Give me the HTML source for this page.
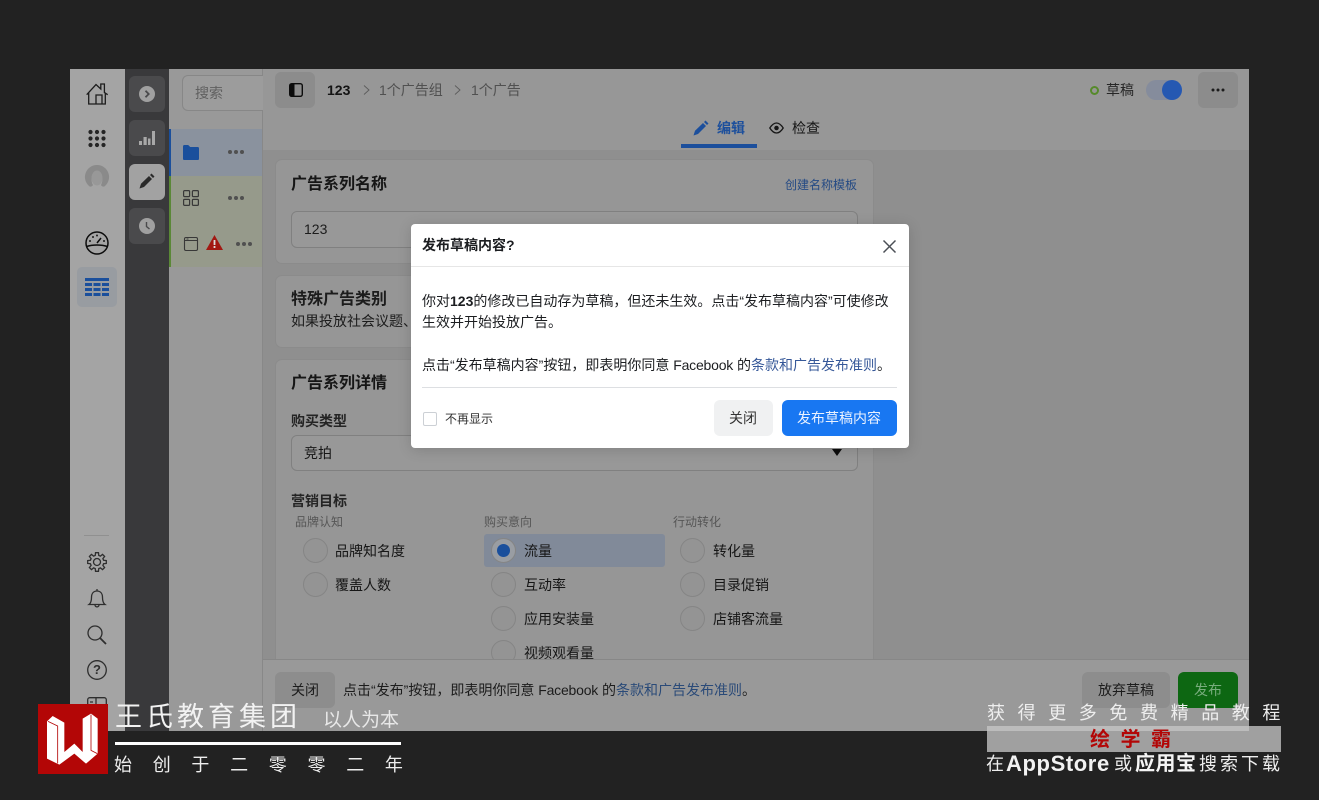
<!DOCTYPE html>
<html><head><meta charset="utf-8"><style>
*{box-sizing:border-box;margin:0;padding:0}
html,body{width:1319px;height:800px;overflow:hidden;background:#222}
body{position:relative;font-family:"Liberation Sans","Noto Sans CJK SC",sans-serif;color:#161616}
.a{position:absolute}
.t{position:absolute;white-space:nowrap;line-height:20px}
.b{font-weight:700}
.card{position:absolute;left:275px;width:599px;background:#969696;border:1px solid #8b8b8b;border-radius:7px}
.r{position:absolute;width:25px;height:25px;border-radius:50%;border:1px solid #858585;background:#949494}
.sq{position:absolute;left:129px;width:36px;height:36px;border-radius:6px;background:#4a4a4c}
.dots{position:absolute;width:16px;height:4px}
.dots i{position:absolute;top:0;width:4px;height:4px;border-radius:50%;background:#505050}
.dots i:nth-child(1){left:0}.dots i:nth-child(2){left:6px}.dots i:nth-child(3){left:12px}
.f{letter-spacing:-.2px}
svg{position:absolute;overflow:visible}
</style></head><body>
<!-- screen -->
<div class="a" style="left:70px;top:69px;width:1179px;height:662px;background:#969696;overflow:hidden"></div>
<!-- nav 1 -->
<div class="a" style="left:70px;top:69px;width:55px;height:662px;background:#a4a4a4"></div>
<svg style="left:84px;top:81px" width="26" height="26" viewBox="0 0 26 26" fill="none" stroke="#1c1c1c" stroke-width="1.300"><path d="M2.700 13.700L12 3.500l4.800 4.500V3h3.600v8.500l3.300 2.200M4.700 11.500V23h16.600V11.500M12 23v-9h6v9"/></svg>
<svg style="left:88px;top:130px" width="18" height="17" fill="#252525"><circle cx="2.500" cy="2" r="2.100"/><circle cx="9" cy="2" r="2.100"/><circle cx="15.500" cy="2" r="2.100"/><circle cx="2.500" cy="8.500" r="2.100"/><circle cx="9" cy="8.500" r="2.100"/><circle cx="15.500" cy="8.500" r="2.100"/><circle cx="2.500" cy="15" r="2.100"/><circle cx="9" cy="15" r="2.100"/><circle cx="15.500" cy="15" r="2.100"/></svg>
<svg style="left:85px;top:165px" width="24" height="24"><path d="M12 0a12 12 0 0 1 8 21c-1 1-3 1-4-1 3-5 1-13-4-13S5 15 8 20c-1 2-3 2-4 1A12 12 0 0 1 12 0z" fill="#8a8a8a"/><ellipse cx="12" cy="13" rx="5.500" ry="7.500" fill="#989898"/></svg>
<svg style="left:85px;top:231px" width="24" height="24" fill="none" stroke="#0c0c0c" stroke-width="1.500"><circle cx="12" cy="12" r="11"/><path d="M1.500 15.500c6-2 15-2 21 0M12 12l4-5"/><g fill="#1c1c1c" stroke="none"><circle cx="5" cy="10" r="1"/><circle cx="8" cy="6" r="1"/><circle cx="12" cy="4.500" r="1"/><circle cx="19" cy="10" r="1"/></g></svg>
<div class="a" style="left:77px;top:267px;width:40px;height:40px;border-radius:5px;background:#989ca1"></div>
<svg style="left:85px;top:278px" width="24" height="19" fill="#1a4f9c"><rect width="24" height="3"/><rect y="5" width="7" height="3"/><rect x="8.500" y="5" width="7" height="3"/><rect x="17" y="5" width="7" height="3"/><rect y="10" width="7" height="3"/><rect x="8.500" y="10" width="7" height="3"/><rect x="17" y="10" width="7" height="3"/><rect y="15" width="7" height="3"/><rect x="8.500" y="15" width="7" height="3"/><rect x="17" y="15" width="7" height="3"/></svg>
<div class="a" style="left:84px;top:535px;width:25px;height:1px;background:#909090"></div>
<svg style="left:87px;top:552px" width="20" height="20" fill="none" stroke="#2e2e2e" stroke-width="1.300"><circle cx="10" cy="10" r="3.500"/><path d="M8.240 3.430L8.530.71H11.470L11.760 3.430L13.400 4.110L15.530 2.400L17.600 4.470L15.890 6.600L16.570 8.240L19.290 8.530V11.470L16.570 11.760L15.890 13.400L17.600 15.530L15.530 17.600L13.400 15.890L11.760 16.570L11.470 19.290H8.530L8.240 16.570L6.600 15.890L4.470 17.600L2.400 15.530L4.110 13.400L3.430 11.760L.71 11.470V8.530L3.430 8.240L4.110 6.600L2.400 4.470L4.470 2.400L6.600 4.110Z"/></svg>
<svg style="left:88px;top:588px" width="18" height="21" fill="none" stroke="#2e2e2e" stroke-width="1.300"><path d="M1 16.500c2-1.500 2.500-3.500 2.500-7C3.500 5 6 3 9 3s5.500 2 5.500 6.500c0 3.500.5 5.500 2.500 7zM7 17c0 2.500 4 2.500 4 0M9 1v2"/></svg>
<svg style="left:87px;top:625px" width="20" height="20" fill="none" stroke="#2e2e2e" stroke-width="1.300"><circle cx="8" cy="8" r="7"/><path d="M13 13l6 6" stroke-width="1.800"/></svg>
<svg style="left:87px;top:660px" width="20" height="20" fill="none" stroke="#2e2e2e" stroke-width="1.300"><circle cx="10" cy="10" r="9.300"/></svg>
<div class="t b" style="left:87px;top:660px;width:20px;text-align:center;font-size:13px;color:#2e2e2e">?</div>
<svg style="left:87px;top:697px" width="20" height="16" fill="none" stroke="#2e2e2e" stroke-width="1.300"><rect x=".7" y=".7" width="18.600" height="16" rx="2"/><path d="M9 1v15M3 5h3M3 8h3"/></svg>
<!-- nav 2 -->
<div class="a" style="left:125px;top:69px;width:44px;height:662px;background:#39393b"></div>
<div class="sq" style="top:76px"></div><div class="a" style="left:139px;top:86px;width:16px;height:16px;border-radius:50%;background:#a0a0a0"></div>
<svg style="left:139px;top:86px" width="16" height="16" fill="none" stroke="#4a4a4c" stroke-width="1.800"><path d="M6.500 4.800l3.200 3.200-3.200 3.200"/></svg>
<div class="sq" style="top:120px"></div>
<svg style="left:139px;top:131px" width="16" height="15" fill="#a8a8a8"><rect x="0" y="10" width="3" height="4"/><rect x="4.500" y="6" width="3.200" height="8"/><rect x="9" y="7.500" width="2.500" height="6.500"/><rect x="13" y="0" width="3" height="14"/></svg>
<div class="sq" style="top:164px;background:#a2a2a2"></div>
<svg style="left:139px;top:173px" width="16" height="16" fill="#2a2a2a"><path d="M.5 15.500L2 10.800 10 3l3 3-8 8zM11 2l1.500-1.500 3 3L14 5z"/></svg>
<div class="sq" style="top:208px"></div><div class="a" style="left:139px;top:218px;width:16px;height:16px;border-radius:50%;background:#a0a0a0"></div>
<svg style="left:139px;top:218px" width="16" height="16" fill="none" stroke="#4a4a4c" stroke-width="1.400"><path d="M7.500 4v4.500l3 2.500"/></svg>
<!-- tree -->
<div class="a" style="left:169px;top:69px;width:94px;height:662px;background:#999;border-right:1px solid #888"></div>
<div class="a" style="left:182px;top:75px;width:81px;height:36px;border:1px solid #878787;border-right:0;border-radius:6px 0 0 6px;background:#9c9c9c"></div>
<div class="t" style="left:195px;top:83px;font-size:14px;color:#606060">搜索</div>
<div class="a" style="left:169px;top:129px;width:93px;height:47px;background:#8a929e;border-left:2px solid #1a4f9c"></div>
<div class="a" style="left:169px;top:176px;width:93px;height:91px;background:#969a8b;border-left:2px solid #5a8836"></div>
<svg style="left:183px;top:145px" width="16" height="15" fill="#1a4f9c"><path d="M0 1.500C0 .7.500 0 1.200 0h4l2 2h7.600c.7 0 1.200.6 1.200 1.300V14c0 .6-.5 1-1.200 1H1.200C.5 15 0 14.600 0 14z"/></svg>
<div class="dots" style="left:228px;top:150px"><i></i><i></i><i></i></div>
<svg style="left:183px;top:190px" width="16" height="16" fill="none" stroke="#383838" stroke-width="1.200"><rect x=".6" y=".6" width="6" height="6" rx="1"/><rect x="9.400" y=".6" width="6" height="6" rx="1"/><rect x=".6" y="9.400" width="6" height="6" rx="1"/><rect x="9.400" y="9.400" width="6" height="6" rx="1"/></svg>
<div class="dots" style="left:228px;top:196px"><i></i><i></i><i></i></div>
<svg style="left:184px;top:237px" width="14" height="14" fill="none" stroke="#383838" stroke-width="1.100"><rect x=".5" y=".5" width="13" height="13" rx="1.500"/><path d="M.5 3.500h13M2.500 2h2"/></svg>
<svg style="left:206px;top:235px" width="17" height="15"><path d="M8.500 0L17 15H0z" fill="#a21812"/><rect x="7.600" y="5" width="1.800" height="5" fill="#ddd"/><rect x="7.600" y="11" width="1.800" height="2" fill="#ddd"/></svg>
<div class="dots" style="left:236px;top:242px"><i></i><i></i><i></i></div>
<!-- main -->
<div class="a" style="left:263px;top:69px;width:986px;height:81px;background:#979797"></div>
<div class="a" style="left:263px;top:150px;width:986px;height:510px;background:#8f8f8f"></div>
<div class="a" style="left:275px;top:72px;width:40px;height:36px;border-radius:6px;background:#8c8c8c"></div>
<svg style="left:289px;top:83px" width="14" height="14" fill="none" stroke="#0c0c0c" stroke-width="1.400"><rect x=".7" y=".7" width="12.600" height="12.600" rx="2"/><rect x="1" y="1" width="4.500" height="12" fill="#0c0c0c" stroke="none"/></svg>
<div class="t b" style="left:327px;top:80px;font-size:14px;color:#141414">123</div>
<svg style="left:363px;top:85px" width="7" height="10" fill="none" stroke="#5c5c5c" stroke-width=".9"><path d="M1 .5l5 4.500-5 4.500"/></svg>
<div class="t" style="left:379px;top:80px;font-size:14px;color:#505050">1个广告组</div>
<svg style="left:454px;top:85px" width="7" height="10" fill="none" stroke="#5c5c5c" stroke-width=".9"><path d="M1 .5l5 4.500-5 4.500"/></svg>
<div class="t" style="left:471px;top:80px;font-size:14px;color:#505050">1个广告</div>
<div class="a" style="left:1090px;top:86px;width:9px;height:9px;border-radius:50%;border:2px solid #568a2a"></div>
<div class="t" style="left:1106px;top:80px;font-size:14px;color:#262626">草稿</div>
<div class="a" style="left:1146px;top:80px;width:36px;height:20px;border-radius:10px;background:#858c9c"></div>
<div class="a" style="left:1162px;top:80px;width:20px;height:20px;border-radius:50%;background:#2558b2"></div>
<div class="a" style="left:1198px;top:72px;width:40px;height:36px;border-radius:6px;background:#8c8c8c"></div>
<svg style="left:1211px;top:88px" width="14" height="4" fill="#1c1c1c"><circle cx="2" cy="2" r="1.500"/><circle cx="7" cy="2" r="1.500"/><circle cx="12" cy="2" r="1.500"/></svg>
<svg style="left:693px;top:120px" width="16" height="16" fill="#1c4f9c"><path d="M.5 15.500L2 10.800 10 3l3 3-8 8zM11 2l1.500-1.500 3 3L14 5z"/></svg>
<div class="t b" style="left:717px;top:118px;font-size:14px;color:#1c4f9c">编辑</div>
<svg style="left:769px;top:122px" width="15" height="12" fill="none" stroke="#161616" stroke-width="1.300"><path d="M.8 6C3 2.500 5.200 1 7.500 1s4.500 1.500 6.700 5c-2.200 3.500-4.400 5-6.700 5S3 9.500.8 6z"/><circle cx="7.500" cy="6" r="1.600" fill="#161616"/></svg>
<div class="t" style="left:792px;top:118px;font-size:14px;color:#161616">检查</div>
<div class="a" style="left:681px;top:144px;width:76px;height:4px;background:#1c4f9c"></div>
<!-- cards -->
<div class="card" style="top:159px;height:105px"></div>
<div class="t b" style="left:291px;top:175px;font-size:16px">广告系列名称</div>
<div class="t" style="left:785px;top:175px;font-size:12px;color:#244a84">创建名称模板</div>
<div class="a" style="left:291px;top:211px;width:567px;height:37px;border:1px solid #808080;border-radius:6px;background:#989898"></div>
<div class="t" style="left:304px;top:219px;font-size:14px;color:#1c1c1c">123</div>
<div class="card" style="top:275px;height:73px"></div>
<div class="t b" style="left:291px;top:290px;font-size:16px;color:#1c1c1c">特殊广告类别</div>
<div class="t" style="left:291px;top:311px;font-size:14px;color:#1c1c1c">如果投放社会议题、</div>
<div class="card" style="top:359px;height:310px"></div>
<div class="t b" style="left:291px;top:374px;font-size:16px">广告系列详情</div>
<div class="t b" style="left:291px;top:411px;font-size:14px;color:#242424">购买类型</div>
<div class="a" style="left:291px;top:435px;width:567px;height:36px;border:1px solid #808080;border-radius:6px;background:#989898"></div>
<div class="t" style="left:304px;top:443px;font-size:14px">竞拍</div>
<svg style="left:832px;top:449px" width="10" height="7" fill="#0c0c0c"><path d="M0 0h10L5 7z"/></svg>
<div class="t b" style="left:291px;top:491px;font-size:14px;color:#242424">营销目标</div>
<div class="t" style="left:295px;top:512px;font-size:12px;color:#565656">品牌认知</div>
<div class="t" style="left:484px;top:512px;font-size:12px;color:#565656">购买意向</div>
<div class="t" style="left:673px;top:512px;font-size:12px;color:#565656">行动转化</div>
<div class="a" style="left:484px;top:534px;width:181px;height:33px;border-radius:3px;background:#818a99"></div>
<div class="r" style="left:303px;top:538px"></div><div class="t" style="left:335px;top:541px;font-size:14px">品牌知名度</div>
<div class="r" style="left:303px;top:572px"></div><div class="t" style="left:335px;top:575px;font-size:14px">覆盖人数</div>
<div class="r" style="left:491px;top:538px;background:#999da3"></div><div class="a" style="left:497px;top:544px;width:13px;height:13px;border-radius:50%;background:#1a4f9c"></div><div class="t" style="left:524px;top:541px;font-size:14px">流量</div>
<div class="r" style="left:491px;top:572px"></div><div class="t" style="left:524px;top:575px;font-size:14px">互动率</div>
<div class="r" style="left:491px;top:606px"></div><div class="t" style="left:524px;top:609px;font-size:14px">应用安装量</div>
<div class="r" style="left:491px;top:640px"></div><div class="t" style="left:524px;top:643px;font-size:14px">视频观看量</div>
<div class="r" style="left:680px;top:538px"></div><div class="t" style="left:713px;top:541px;font-size:14px">转化量</div>
<div class="r" style="left:680px;top:572px"></div><div class="t" style="left:713px;top:575px;font-size:14px">目录促销</div>
<div class="r" style="left:680px;top:606px"></div><div class="t" style="left:713px;top:609px;font-size:14px">店铺客流量</div>
<!-- bottom bar -->
<div class="a" style="left:263px;top:659px;width:986px;height:72px;background:#999;border-top:1px solid #878787"></div>
<div class="a" style="left:275px;top:672px;width:60px;height:36px;border-radius:6px;background:#8d8d8d"></div>
<div class="t" style="left:291px;top:680px;font-size:14px;color:#1c1c1c">关闭</div>
<div class="t" style="left:343px;top:680px;font-size:14px;color:#1c1c1c">点击“发布”按钮，即表明你同意 <span class="f">Facebook</span> 的<span style="color:#2a4a78">条款和广告发布准则</span>。</div>
<div class="a" style="left:1082px;top:672px;width:88px;height:36px;border-radius:6px;background:#8d8d8d"></div>
<div class="t" style="left:1098px;top:680px;font-size:14px;color:#1c1c1c">放弃草稿</div>
<div class="a" style="left:1178px;top:672px;width:60px;height:36px;border-radius:6px;background:#0d6712"></div>
<div class="t" style="left:1194px;top:680px;font-size:14px;color:#78ad7d">发布</div>
<!-- modal -->
<div class="a" style="left:411px;top:224px;width:498px;height:224px;background:#fff;border-radius:4px;box-shadow:0 2px 14px rgba(0,0,0,.15)"></div>
<div class="a" style="left:411px;top:266px;width:498px;height:1px;background:#e6e6e6"></div>
<div class="t b" style="left:422px;top:235px;font-size:14px;color:#1c1e21">发布草稿内容?</div>
<svg style="left:883px;top:240px" width="13" height="13" fill="none" stroke="#4b4f56" stroke-width="1.500"><path d="M.5.500l12 12M12.500.500l-12 12"/></svg>
<div class="t" style="left:422px;top:291px;font-size:14px;color:#1c1e21">你对<b>123</b>的修改已自动存为草稿，但还未生效。点击“发布草稿内容”可使修改</div>
<div class="t" style="left:422px;top:312px;font-size:14px;color:#1c1e21">生效并开始投放广告。</div>
<div class="t" style="left:422px;top:355px;font-size:14px;color:#1c1e21">点击“发布草稿内容”按钮，即表明你同意 <span class="f">Facebook</span> 的<span style="color:#365899">条款和广告发布准则</span>。</div>
<div class="a" style="left:422px;top:387px;width:475px;height:1px;background:#dddfe2"></div>
<div class="a" style="left:423px;top:412px;width:14px;height:14px;border:1px solid #ccd0d5;border-radius:2px"></div>
<div class="t" style="left:445px;top:409px;font-size:12px;color:#333">不再显示</div>
<div class="a" style="left:714px;top:400px;width:59px;height:36px;border-radius:6px;background:#f0f1f2"></div>
<div class="t" style="left:729px;top:408px;font-size:14px;color:#333">关闭</div>
<div class="a" style="left:782px;top:400px;width:115px;height:36px;border-radius:6px;background:#1877f2"></div>
<div class="t" style="left:797px;top:408px;font-size:14px;color:#eaf2ff">发布草稿内容</div>
<!-- watermark -->
<div class="a" style="left:38px;top:704px;width:70px;height:70px;background:#b30606"></div>
<svg style="left:36px;top:702px" width="74" height="74" viewBox="0 0 222 222"><path fill="#fff" d="M33 58L50 42 85 62V150L115 125 140 150V50L165 35 185 50V155L150 185 115 155 70 188 33 170Z"/><path fill="none" stroke="#b30606" stroke-width="2.500" d="M36 58L65 72V184M165 38V145L184 155"/></svg>
<div class="t" style="left:115px;top:702px;font-size:27px;line-height:30px;color:#f2f2f2;letter-spacing:4px">王氏教育集团</div>
<div class="t" style="left:323px;top:711px;font-size:19px;line-height:20px;color:#e8e8e8">以人为本</div>
<div class="a" style="left:115px;top:742px;width:286px;height:3px;background:#fff"></div>
<div class="t" style="left:114px;top:755px;font-size:18px;color:#eee;letter-spacing:20.700px">始创于二零零二年</div>
<div class="t" style="left:987px;top:703px;font-size:18px;color:#eee;letter-spacing:12.600px">获得更多免费精品教程</div>
<div class="a" style="left:987px;top:726px;width:294px;height:26px;background:#a0a0a0"></div>
<div class="a" style="left:987px;top:726px;width:262px;height:5px;background:#bcbcbc"></div>
<div class="t b" style="left:1090px;top:730px;font-size:20px;color:#b30606;letter-spacing:10.500px">绘学霸</div>
<div class="t" style="left:986px;top:754px;font-size:18px;color:#eee">在</div>
<div class="t b" style="left:1006px;top:754px;font-size:22px;color:#f2f2f2;letter-spacing:.6px">AppStore</div>
<div class="t" style="left:1114px;top:754px;font-size:18px;color:#eee">或</div>
<div class="t b" style="left:1135px;top:754px;font-size:20px;color:#f5f5f5;letter-spacing:.5px">应用宝</div>
<div class="t" style="left:1199px;top:754px;font-size:18px;color:#eee;letter-spacing:3px">搜索下载</div>
</body></html>
